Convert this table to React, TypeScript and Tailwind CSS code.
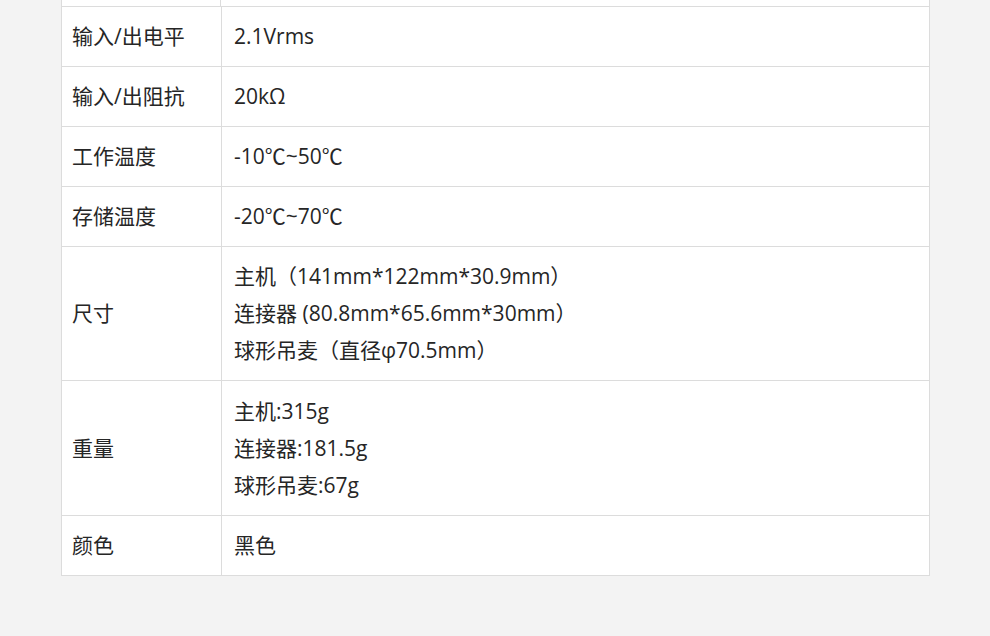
import React from "react";

const rows: { label: string; value: string[]; extra?: string }[] = [
  { label: "输入/出电平", value: ["2.1Vrms"] },
  { label: "输入/出阻抗", value: ["20kΩ"] },
  { label: "工作温度", value: ["-10℃~50℃"] },
  { label: "存储温度", value: ["-20℃~70℃"] },
  {
    label: "尺寸",
    value: [
      "主机（141mm*122mm*30.9mm）",
      "连接器 (80.8mm*65.6mm*30mm）",
      "球形吊麦（直径φ70.5mm）",
    ],
  },
  {
    label: "重量",
    value: ["主机:315g", "连接器:181.5g", "球形吊麦:67g"],
    extra: "pt-[12px]",
  },
  { label: "颜色", value: ["黑色"] },
];

const SpecTable = () => {
  return (
    <div className="w-[990px] h-[636px] bg-[#f3f3f3] overflow-hidden">
      <div
        className="ml-[61px] w-[869px] text-[21px] text-[#262626]"
        style={{ fontFamily: '"Open Sans", "Noto Sans CJK SC", sans-serif' }}
      >
        {/* tail of the row above */}
        <div className="flex h-[6px] bg-white border-x border-[#dcdcdc]">
          <div className="w-[159px] border-r border-[#dcdcdc]" />
          <div className="flex-1" />
        </div>
        <div className="bg-white border border-[#dcdcdc]">
          {rows.map((row, i) => (
            <div
              key={row.label}
              className={
                "flex " + (i > 0 ? "border-t border-[#dcdcdc]" : "")
              }
            >
              <div className="w-[160px] shrink-0 border-r border-[#dcdcdc] pl-[10px] py-[11px] flex items-center leading-[37px]">
                {row.label}
              </div>
              <div
                className={
                  "flex-1 pl-[12px] py-[11px] leading-[37px] " +
                  (row.extra ?? "")
                }
              >
                {row.value.map((v) => (
                  <div key={v}>{v}</div>
                ))}
              </div>
            </div>
          ))}
        </div>
      </div>
    </div>
  );
};

export default SpecTable;
